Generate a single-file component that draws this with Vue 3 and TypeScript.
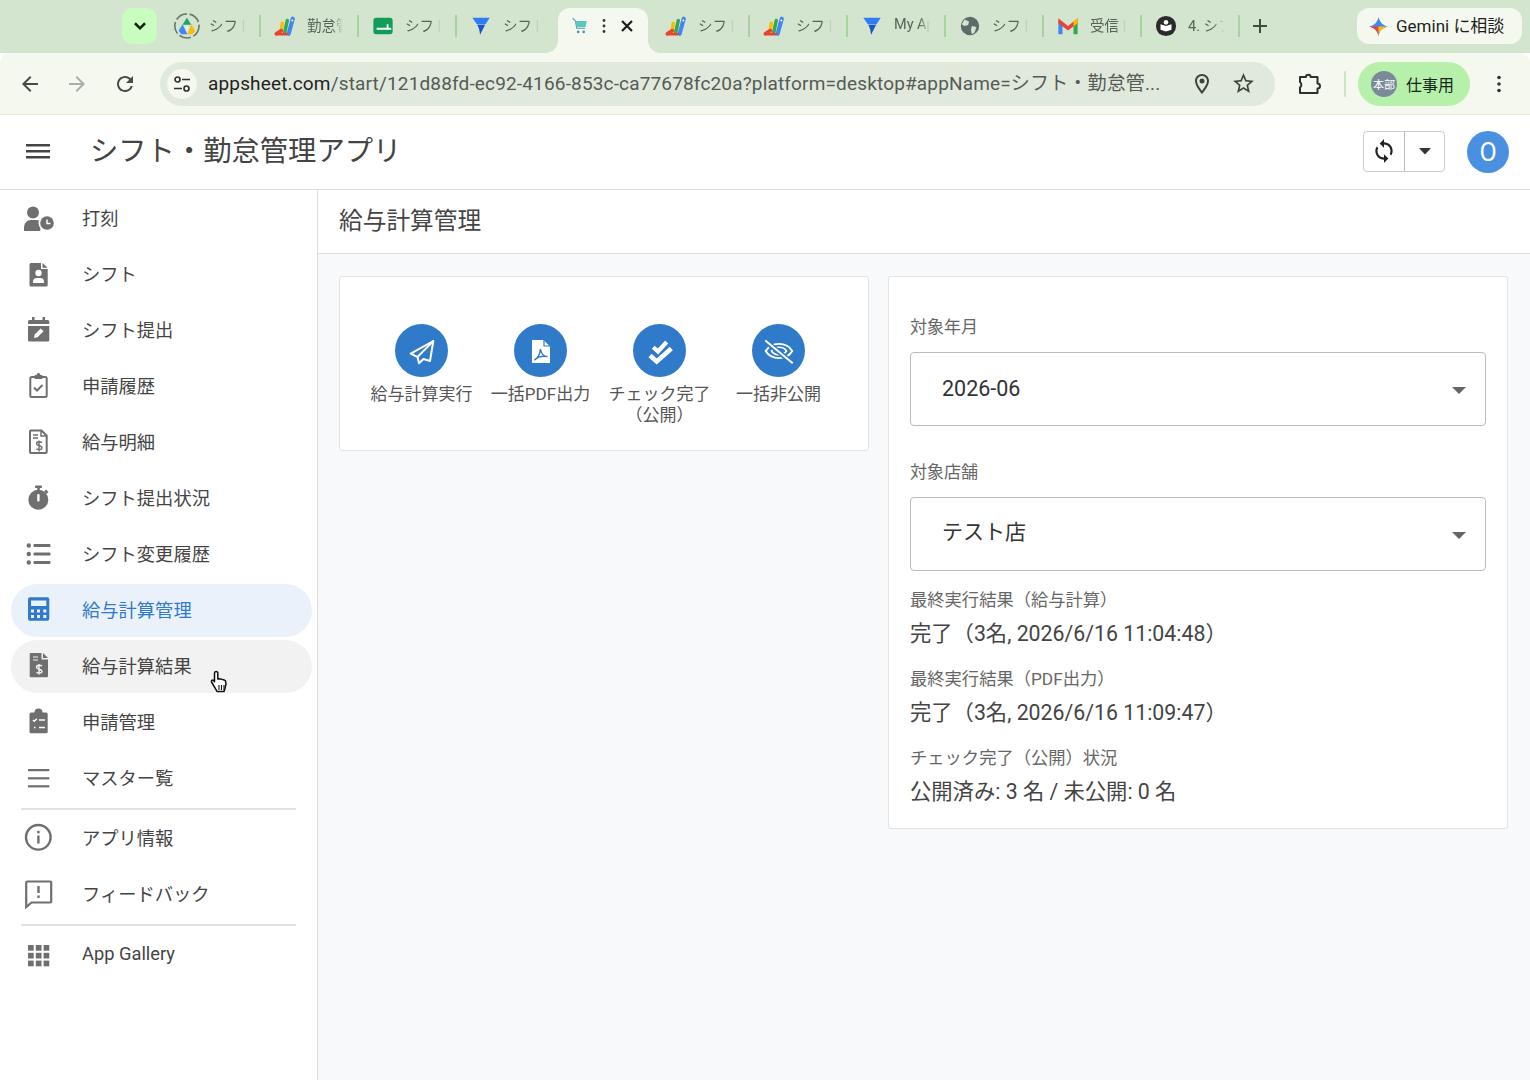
<script setup lang="ts">
interface Tab {
	icon: string
	title: string
	active?: boolean
}

interface NavItem {
	label: string
	icon: string
	state?: string
}

const driveIcon = `<g transform="translate(-2.500 -2.500) scale(1.200)"><circle cx="12" cy="12" r="11" fill="none" stroke="#6b7a6b" stroke-width="1.500" stroke-dasharray="11 2.500"/><path d="M12 4.500l4 6.500H8z" fill="#1fa463"/><path d="M8 10.500l-3.500 6 2.500 3h5.500z" fill="#4285f4"/><path d="M16 10.500l3.500 6-2.500 3h-4.500z" fill="#fbbc04"/><path d="M12 11l-1.500 3 1.500 3 1.500-3z" fill="#e8f0e4"/></g>`
const fanIcon = `<g fill="none" stroke-linecap="round"><path d="M16 20.500L20.500 4" stroke="#4285f4" stroke-width="4.500"/><path d="M11.500 20L14.500 6" stroke="#34a853" stroke-width="3.800"/><path d="M7.500 20L9 9" stroke="#fbbc04" stroke-width="3.800"/><path d="M2.500 20.500L8 17" stroke="#ea4335" stroke-width="4"/><path d="M3 21h11" stroke="#ea4335" stroke-width="2.500"/></g><circle cx="20" cy="6" r="1" fill="#fff"/>`
const sheetIcon = `<rect x="1.500" y="3" width="21" height="18" rx="3" fill="#0f9d58"/><path d="M5 14h11v-4h2v4h3v2H5z" fill="#fff"/>`
const appsheetIcon = `<path d="M2.500 3h19l-4.500 7H7.500z" fill="#2f7df6"/><path d="M8 10.500h8.500L11 21.500l-1-6z" fill="#1a56c4"/>`
const cartIcon = `<path d="M4 3.500L7 6.500l1.500 8h9" fill="none" stroke="#5a90b0" stroke-width="1.200"/><path d="M7 6.500h12.300l-1.300 6.500H8.300z" fill="#55c8c0"/><circle cx="10" cy="18.500" r="1.500" fill="#5a8fb5"/><circle cx="16" cy="18.500" r="1.500" fill="#5a8fb5"/>`
const globeIcon = `<circle cx="12" cy="12" r="10" fill="#5f6b66"/><path d="M6 5l5 2-1 4-4 1-3-2zM14 12l5 1-2 6-3 2-1-5z" fill="#d3e5ce"/>`
const gmailIcon = `<path d="M1.500 6v15h4.500V10z" fill="#4285f4"/><path d="M22.500 6v15H18V10z" fill="#34a853"/><path d="M1.500 3.500L12 12l10.500-8.500v5.500L12 17 1.500 9z" fill="#ea4335"/><path d="M18 6.500l4.500-3v5.500L18 12.500z" fill="#fbbc04"/>`
const bookIcon = `<circle cx="12" cy="12" r="11" fill="#2a2a2a"/><path d="M6 10l6 2 6-2v6l-6 2-6-2z" fill="#fff"/><circle cx="12" cy="8" r="2.500" fill="#fff"/>`

const tabs: Tab[] = [
	{ icon: driveIcon, title: "シフト・勤怠" },
	{ icon: fanIcon, title: "勤怠管理" },
	{ icon: sheetIcon, title: "シフト・勤怠" },
	{ icon: appsheetIcon, title: "シフト・勤怠" },
	{ icon: cartIcon, title: "", active: true },
	{ icon: fanIcon, title: "シフト・勤怠" },
	{ icon: fanIcon, title: "シフト・勤怠" },
	{ icon: appsheetIcon, title: "My Apps" },
	{ icon: globeIcon, title: "シフト・勤怠" },
	{ icon: gmailIcon, title: "受信トレイ" },
	{ icon: bookIcon, title: "4. シフト" },
]

// sidebar icons live on a 40x40 box centred on the row
const nav: NavItem[] = [
	{
		label: "打刻",
		icon: `<circle cx="15" cy="15.500" r="6"/><path d="M6 34v-3c0-5 3-8 7-8h5c3 0 5 1 6 2l-2 9z"/><circle cx="29" cy="26" r="8.500" fill="#fff"/><circle cx="29" cy="26" r="6.800"/><path d="M29 22.500V26.500h3.500" fill="none" stroke="#fff" stroke-width="1.500"/>`,
	},
	{
		label: "シフト",
		icon: `<path d="M13 10h10v6h6.700v16a1.500 1.500 0 0 1-1.500 1.500H13a1.500 1.500 0 0 1-1.500-1.500V11.500A1.500 1.500 0 0 1 13 10z"/><path d="M24.500 10l5.200 4.800h-5.200z"/><circle cx="20.500" cy="20" r="3.200" fill="#fff"/><path d="M15 30v-1.500c0-2 1.500-3.500 3.500-3.500h4c2 0 3.500 1.500 3.500 3.500V30z" fill="#fff"/>`,
	},
	{
		label: "シフト提出",
		icon: `<path d="M14 8h2.500v3h8v-3H27v3h2.800a1.500 1.500 0 0 1 1.500 1.500V15H10v-2.500A1.500 1.500 0 0 1 11.500 11H14z"/><path d="M10 17h21.300v14a1.500 1.500 0 0 1-1.500 1.500h-18.300A1.500 1.500 0 0 1 10 31z"/><path d="M16 29l.7-3.500 6-6 2.800 2.800-6 6z" fill="#fff"/>`,
	},
	{
		label: "申請履歴",
		icon: `<rect x="12.300" y="12" width="16.400" height="20" rx="1.500" fill="none" stroke="currentColor" stroke-width="2"/><rect x="16.500" y="10" width="8" height="4" rx="1"/><circle cx="20.500" cy="9.800" r="1.800"/><path d="M16 22.500l3 3 5.500-5.500" fill="none" stroke="currentColor" stroke-width="2"/>`,
	},
	{
		label: "給与明細",
		icon: `<path d="M13 9.500h10.500l5.200 5.200V31a1 1 0 0 1-1 1H13a1 1 0 0 1-1-1V10.500a1 1 0 0 1 1-1z" fill="none" stroke="currentColor" stroke-width="2"/><path d="M15 14h5M15 17h5M23 10v5h5" fill="none" stroke="currentColor" stroke-width="1.500"/><path d="M24 21.500c-1-1-5.500-1.300-5.500 1.200s5.500 1.500 5.500 4-4.500 2.200-5.500 1M21 19.500v11" fill="none" stroke="currentColor" stroke-width="1.400"/>`,
	},
	{
		label: "シフト提出状況",
		icon: `<rect x="17" y="8.500" width="7" height="2.500" rx=".8"/><rect x="19.200" y="10" width="2.600" height="4"/><circle cx="20.300" cy="22.700" r="10"/><path d="M28 12.500l2.500 2.500-2 2-2.500-2.500z"/><rect x="19.200" y="17" width="2.400" height="7.500" rx="1" fill="#fff"/>`,
	},
	{
		label: "シフト変更履歴",
		icon: `<circle cx="10.800" cy="12.500" r="2.200"/><circle cx="10.800" cy="21" r="2.200"/><circle cx="10.800" cy="29.500" r="2.200"/><rect x="15.500" y="11" width="17" height="3" rx="1"/><rect x="15.500" y="19.500" width="17" height="3" rx="1"/><rect x="15.500" y="28" width="17" height="3" rx="1"/>`,
	},
	{
		label: "給与計算管理",
		state: "active",
		icon: `<rect x="10" y="8.300" width="21.300" height="23.400" rx="2"/><rect x="13" y="11.500" width="15.300" height="5.500" fill="#eaf1fb"/><g fill="#eaf1fb"><rect x="13" y="20.500" width="3" height="3"/><rect x="19" y="20.500" width="3" height="3"/><rect x="25.300" y="20.500" width="3" height="3"/><rect x="13" y="26" width="3" height="3"/><rect x="19" y="26" width="3" height="3"/><rect x="25.300" y="26" width="3" height="3"/></g>`,
	},
	{
		label: "給与計算結果",
		state: "hover",
		icon: `<path d="M13 8h10.500v6.500H30V31a1.300 1.300 0 0 1-1.300 1.300H13a1.300 1.300 0 0 1-1.300-1.300V9.300A1.300 1.300 0 0 1 13 8z"/><path d="M25 8l5 5h-5z"/><path d="M15 12h5M15 15h5" stroke="#f2f2f2" stroke-width="1.200"/><path d="M24 21c-1-1-5.500-1.300-5.500 1.200s5.500 1.500 5.500 4-4.500 2.200-5.500 1M21 19v10.500" fill="none" stroke="#f2f2f2" stroke-width="1.400"/>`,
	},
	{
		label: "申請管理",
		icon: `<path d="M13 11.500h3.500a4 4 0 0 1 8 0H28a1.500 1.500 0 0 1 1.700 1.500v17.800a1.500 1.500 0 0 1-1.500 1.500H13a1.500 1.500 0 0 1-1.500-1.500V13a1.500 1.500 0 0 1 1.500-1.500z"/><path d="M15 19l1.300 1.300 2.500-2.500M21 19h6M16 26.500h1.500M21 26.500h6" fill="none" stroke="#fff" stroke-width="1.400"/>`,
	},
	{
		label: "マスター覧",
		icon: `<rect x="10" y="12" width="21.300" height="2.200"/><rect x="10" y="20.200" width="21.300" height="2.200"/><rect x="10" y="28.200" width="21.300" height="2.200"/>`,
	},
]

const navExtra: NavItem[] = [
	{
		label: "アプリ情報",
		icon: `<circle cx="20.300" cy="20.300" r="12.300" fill="none" stroke="currentColor" stroke-width="2.400"/><rect x="19.200" y="18.500" width="2.400" height="8"/><rect x="19.200" y="13.800" width="2.400" height="2.600"/>`,
	},
	{
		label: "フィードバック",
		icon: `<path d="M8.200 9.500a1 1 0 0 1 1-1h23a1 1 0 0 1 1 1v19a1 1 0 0 1-1 1H13.500l-5.300 4.500z" fill="none" stroke="currentColor" stroke-width="2.200"/><rect x="19.300" y="13" width="2.400" height="7"/><rect x="19.300" y="22.500" width="2.400" height="2.500"/>`,
	},
]

const gridCells = [10, 17.8, 25.6].flatMap((y) =>
	[10, 17.8, 25.6].map((x) => `<rect x="${x}" y="${y + 1}" width="5.700" height="5.700"/>`),
)

const actions = [
	{
		label: "給与計算実行",
		icon: `<path d="M29.300 8L6.700 20.700l6.800 3.300L15 30.300l4.500-4.300 6.500 2z" fill="none" stroke="#fff" stroke-width="2" stroke-linejoin="round"/><path d="M13.500 24L29.300 8" fill="none" stroke="#fff" stroke-width="1.800"/>`,
	},
	{
		label: "一括PDF出力",
		icon: `<path d="M9 7h11.500l6.500 6.500V30H9z" fill="#fff"/><path d="M21 6.500v6.500h6.500" fill="none" stroke="#2f7bc9" stroke-width="1.200"/><path d="M11.500 27c3.500-2 5.500-6 6-11 .5 4 3 7.500 7 7.500-4.500-.5-9.500 0-13 3.500z" fill="none" stroke="#2f7bc9" stroke-width="1.500"/>`,
	},
	{
		label: "チェック完了\n（公開）",
		icon: `<path d="M11.300 14.200L16 18.500l8.700-9.500" fill="none" stroke="#fff" stroke-width="4.200"/><path d="M8 22.500l6.700 6L29.300 15.500" fill="none" stroke="#fff" stroke-width="4.600"/>`,
	},
	{
		label: "一括非公開",
		icon: `<path d="M4.700 18c5.500-9.500 21-9.500 26.600 0-5.600 9.500-21 9.500-26.600 0z" fill="none" stroke="#fff" stroke-width="1.900"/><path d="M10.500 18c3-5 12-5 15 0-3 5-12 5-15 0z" fill="none" stroke="#fff" stroke-width="1.700"/><path d="M4.300 8l27.400 22.300" stroke="#2f7bc9" stroke-width="5"/><path d="M4.300 7.500l27.400 22.800" stroke="#fff" stroke-width="2"/>`,
	},
]

const results = [
	{ label: "最終実行結果（給与計算）", value: "完了（3名, 2026/6/16 11:04:48）" },
	{ label: "最終実行結果（PDF出力）", value: "完了（3名, 2026/6/16 11:09:47）" },
	{ label: "チェック完了（公開）状況", value: "公開済み: 3 名 / 未公開: 0 名" },
]

const selects = [
	{ label: "対象年月", value: "2026-06", cjk: false },
	{ label: "対象店舗", value: "テスト店", cjk: true },
]
</script>

<template>
	<div class="page">
		<div class="tabstrip">
			<button class="tab-search">
				<svg viewBox="0 0 24 24" width="22" height="22"><path d="M6.500 9l5.500 5.500L17.500 9" fill="none" stroke="#10240f" stroke-width="2.800" /></svg>
			</button>
			<div class="tabs">
				<div v-for="(tab, i) in tabs" :key="i" class="tab" :class="{ active: tab.active, nosep: tabs[i + 1]?.active }">
					<svg class="favicon" viewBox="0 0 24 24" width="22" height="22" v-html="tab.icon"></svg>
					<template v-if="tab.active">
						<svg viewBox="0 0 4 16" width="4" height="16" class="tab-more"><circle cx="2" cy="2.500" r="1.400" /><circle cx="2" cy="8" r="1.400" /><circle cx="2" cy="13.500" r="1.400" /></svg>
						<svg viewBox="0 0 14 14" width="14" height="14"><path d="M2 2l10 10M12 2L2 12" stroke="#1c1c1c" stroke-width="2.200" /></svg>
					</template>
					<span v-else class="tab-title">{{ tab.title }}</span>
				</div>
				<svg class="tab-new" viewBox="0 0 16 16" width="16" height="16"><path d="M8 1v14M1 8h14" stroke="#3f4d3f" stroke-width="2" /></svg>
			</div>
			<div class="gemini">
				<svg viewBox="0 0 24 24" width="21" height="21">
					<path d="M12 1c1 6 5 10 11 11-6 1-10 5-11 11-1-6-5-10-11-11 6-1 10-5 11-11z" fill="#4285f4" />
					<path d="M12 12V1c1 6 5 10 11 11z" fill="#3f8cf0" />
					<path d="M12 12H1c6 1 10 5 11 11z" fill="#ea4335" />
					<path d="M12 12h11c-6 1-10 5-11 11z" fill="#fbbc04" />
				</svg>
				<span>Gemini に相談</span>
			</div>
		</div>

		<div class="toolbar">
			<svg class="tool back" viewBox="0 0 24 24" width="24" height="24"><path d="M20 11H7.830l5.590-5.590L12 4l-8 8 8 8 1.410-1.410L7.830 13H20v-2z" /></svg>
			<svg class="tool forward" viewBox="0 0 24 24" width="24" height="24"><path d="M12 4l-1.410 1.410L16.170 11H4v2h12.170l-5.580 5.590L12 20l8-8z" /></svg>
			<svg class="tool" viewBox="0 0 24 24" width="24" height="24"><path d="M17.650 6.350A7.958 7.958 0 0 0 12 4c-4.420 0-7.990 3.580-7.990 8s3.570 8 7.990 8c3.730 0 6.840-2.550 7.730-6h-2.080A5.990 5.990 0 0 1 12 18c-3.310 0-6-2.690-6-6s2.690-6 6-6c1.660 0 3.140.690 4.220 1.780L13 11h7V4l-2.350 2.350z" /></svg>
			<div class="omnibox">
				<span class="site-info">
					<svg viewBox="0 0 20 20" width="20" height="20" fill="none" stroke="#333" stroke-width="1.700"><circle cx="5.500" cy="5.500" r="2.500" /><path d="M10 5.500h8M2 14.500h8" /><circle cx="14.500" cy="14.500" r="2.500" /></svg>
				</span>
				<span class="url"><b>appsheet.com</b>/start/121d88fd-ec92-4166-853c-ca77678fc20a?platform=desktop#appName=シフト・勤怠管...</span>
				<svg class="omni-icon" viewBox="0 0 24 24" width="24" height="24"><path d="M12 2C8.130 2 5 5.130 5 9c0 5.250 7 13 7 13s7-7.750 7-13c0-3.870-3.130-7-7-7zM7 9c0-2.760 2.240-5 5-5s5 2.240 5 5c0 2.880-2.880 7.190-5 9.880C9.920 16.210 7 11.850 7 9z" /><circle cx="12" cy="9" r="2.500" /></svg>
				<svg class="omni-icon" viewBox="0 0 24 24" width="25" height="25"><path d="M22 9.240l-7.190-.62L12 2 9.190 8.630 2 9.240l5.460 4.730L5.820 21 12 17.270 18.180 21l-1.630-7.030L22 9.240zM12 15.400l-3.760 2.270 1-4.280-3.320-2.880 4.380-.38L12 6.100l1.710 4.040 4.380.38-3.320 2.880 1 4.280L12 15.400z" /></svg>
			</div>
			<svg class="ext" viewBox="0 0 26 26" width="26" height="26"><path d="M4 6h6a2.300 2.300 0 0 1 4.600 0h6.900v6.500a2.500 2.500 0 0 1 0 5V22H4v-5.500a3.500 3.500 0 0 0 0-5.500z" fill="none" stroke="#2a332a" stroke-width="2" stroke-linejoin="round" /></svg>
			<span class="tool-sep"></span>
			<div class="profile">
				<span class="profile-avatar">本部</span>
				<span>仕事用</span>
			</div>
			<svg class="kebab" viewBox="0 0 4 18" width="4" height="18"><circle cx="2" cy="2.500" r="1.800" /><circle cx="2" cy="9" r="1.800" /><circle cx="2" cy="15.500" r="1.800" /></svg>
		</div>

		<header class="app-header">
			<svg class="menu" viewBox="0 0 24 20" width="24" height="20"><path d="M0 3h24v2.400H0zM0 9h24v2.400H0zM0 15h24v2.400H0z" /></svg>
			<h1>シフト・勤怠管理アプリ</h1>
			<div class="sync">
				<span class="sync-main">
					<svg viewBox="0 0 24 24" width="26" height="26"><path d="M12 4V1L8 5l4 4V6c3.310 0 6 2.690 6 6 0 1.010-.25 1.970-.7 2.800l1.460 1.460A7.930 7.930 0 0 0 20 12c0-4.420-3.580-8-8-8zm0 14c-3.310 0-6-2.690-6-6 0-1.010.25-1.970.7-2.800L5.240 7.740A7.930 7.930 0 0 0 4 12c0 4.420 3.580 8 8 8v3l4-4-4-4v3z" /></svg>
				</span>
				<span class="sync-drop">
					<svg viewBox="0 0 12 7" width="12" height="7"><path d="M0 0h12L6 6.500z" /></svg>
				</span>
			</div>
			<span class="user">O</span>
		</header>

		<div class="app-body">
			<nav class="sidebar">
				<a v-for="item in nav" :key="item.label" class="nav-item" :class="item.state">
					<svg class="nav-icon" viewBox="0 0 40 40" width="40" height="40" v-html="item.icon"></svg>
					<span>{{ item.label }}</span>
				</a>
				<hr class="rule-first" />
				<a v-for="item in navExtra" :key="item.label" class="nav-item">
					<svg class="nav-icon" viewBox="0 0 40 40" width="40" height="40" v-html="item.icon"></svg>
					<span>{{ item.label }}</span>
				</a>
				<hr />
				<a class="nav-item">
					<svg class="nav-icon" viewBox="0 0 40 40" width="40" height="40" v-html="gridCells.join('')"></svg>
					<span>App Gallery</span>
				</a>
				<svg class="pointer" viewBox="0 0 20 24" width="20" height="24">
					<path d="M6 1.500c1 0 1.800.8 1.800 1.800V9l1-.3 1.200.3 1.200.1 1.300.5 1.500.3 1.500 1 .5 3-1 4.500-1 3H7l-2-3.500L1.500 12c-.6-1.500 1-2.500 2-1.500l1 1.200V3.300c0-1 .5-1.800 1.500-1.800z" fill="#fff" stroke="#111" stroke-width="1.500" stroke-linejoin="round" />
					<path d="M9 15v5M11.500 15v5M14 15v5" stroke="#111" stroke-width="1.100" />
				</svg>
			</nav>

			<main class="content">
				<div class="content-title">給与計算管理</div>
				<div class="content-body">
					<section class="card actions">
						<div v-for="action in actions" :key="action.label" class="action">
							<span class="action-circle">
								<svg viewBox="0 0 36 36" width="36" height="36" v-html="action.icon"></svg>
							</span>
							<span class="action-label">{{ action.label }}</span>
						</div>
					</section>
					<section class="card form">
						<div v-for="field in selects" :key="field.label" class="field">
							<div class="field-label">{{ field.label }}</div>
							<div class="select">
								<span :class="{ cjk: field.cjk }">{{ field.value }}</span>
								<svg viewBox="0 0 14 7" width="14" height="7"><path d="M0 0h14L7 7z" /></svg>
							</div>
						</div>
						<div class="results">
							<div v-for="row in results" :key="row.label" class="result">
								<div class="field-label">{{ row.label }}</div>
								<div class="result-value">{{ row.value }}</div>
							</div>
						</div>
					</section>
				</div>
			</main>
		</div>
	</div>
</template>

<style>
html,
body {
	margin: 0;
	background: #fff;
	overflow: hidden;
}
</style>

<style scoped>
.page {
	width: 1530px;
	height: 1080px;
	display: flex;
	flex-direction: column;
	overflow: hidden;
	font-family: Roboto, "Noto Sans CJK JP", sans-serif;
	color: #444;
}

.tabstrip {
	height: 53px;
	flex: none;
	display: flex;
	align-items: flex-start;
	background: #d3e5ce;
	padding: 8px 8px 0 122px;
	box-sizing: border-box;
}

.tab-search {
	width: 35px;
	height: 36px;
	border: 0;
	padding: 0;
	border-radius: 10px;
	background: #c9fdc0;
	display: flex;
	align-items: center;
	justify-content: center;
}

.tabs {
	display: flex;
	align-items: flex-start;
	margin-left: 5px;
	flex: 1;
}

.tab {
	width: 98px;
	height: 36px;
	box-sizing: border-box;
	display: flex;
	align-items: center;
	gap: 11px;
	padding-left: 14px;
	position: relative;
	flex: none;
}

.tab::after {
	content: "";
	position: absolute;
	right: -1px;
	top: 7px;
	height: 22px;
	width: 2px;
	background: #a7d39e;
}

.tab.nosep::after {
	display: none;
}

.tab.active {
	width: 90px;
	height: 45px;
	margin: 0 3px 0 4px;
	padding: 0 0 9px 11px;
	gap: 0;
	background: #f4f8ef;
	border-radius: 12px 12px 0 0;
}

/* the flared feet of the active tab */
.tab.active::before,
.tab.active::after {
	content: "";
	position: absolute;
	top: auto;
	bottom: 0;
	width: 12px;
	height: 12px;
}

.tab.active::before {
	left: -12px;
	background: radial-gradient(circle at 0 0, transparent 11.500px, #f4f8ef 12px);
}

.tab.active::after {
	right: -12px;
	background: radial-gradient(circle at 100% 0, transparent 11.500px, #f4f8ef 12px);
}

.tab-more {
	margin-left: 11px;
	fill: #333;
	margin-right: 14px;
}

.favicon {
	flex: none;
	overflow: visible;
}

.tab-title {
	width: 36px;
	overflow: hidden;
	white-space: nowrap;
	font-size: 14.500px;
	color: #59625a;
	margin-bottom: 3px;
	-webkit-mask-image: linear-gradient(to right, #000 70%, transparent 100%);
	mask-image: linear-gradient(to right, #000 70%, transparent 100%);
}

.tab-new {
	margin: 10px 0 0 13px;
}

.gemini {
	width: 165px;
	height: 36px;
	flex: none;
	display: flex;
	align-items: center;
	gap: 7px;
	padding-left: 11px;
	box-sizing: border-box;
	border-radius: 12px;
	background: #f4f8ef;
	color: #1f1f1f;
	font-size: 17px;
}

.gemini span {
	margin-bottom: 4px;
}

.toolbar {
	height: 62px;
	flex: none;
	display: flex;
	align-items: center;
	background: #f4f8ef;
	border-radius: 10px 10px 0 0;
	box-sizing: border-box;
	padding: 0 0 0 18px;
	border-bottom: 1px solid #e4e8e0;
}

.tool {
	fill: #454c45;
	margin-right: 23px;
	flex: none;
}

.forward {
	fill: #a9aea7;
	margin-right: 24px;
}

.omnibox {
	width: 1115px;
	height: 44px;
	flex: none;
	display: flex;
	align-items: center;
	background: #e1e9dd;
	border-radius: 22px;
	box-sizing: border-box;
	padding-left: 7px;
}

.site-info {
	width: 30px;
	height: 30px;
	border-radius: 50%;
	background: #f4f8ef;
	display: flex;
	align-items: center;
	justify-content: center;
	flex: none;
}

.url {
	margin: 0 0 5px 11px;
	width: 982px;
	flex: none;
	white-space: nowrap;
	overflow: hidden;
	font-size: 19px;
	letter-spacing: 0.16px;
	color: #555b55;
}

.url b {
	font-weight: 400;
	color: #1f1f1f;
}

.omni-icon {
	fill: #3d443d;
	flex: none;
	margin-right: 17px;
}

.ext {
	margin-left: 21px;
	flex: none;
}

.tool-sep {
	width: 2px;
	height: 26px;
	background: #cfe5c6;
	margin: 0 12px 0 22px;
}

.profile {
	width: 112px;
	height: 44px;
	flex: none;
	box-sizing: border-box;
	padding-left: 13px;
	display: flex;
	align-items: center;
	gap: 9px;
	border-radius: 22px;
	background: #b7f0aa;
	color: #16261a;
	font-size: 16px;
}

.profile-avatar {
	width: 26px;
	height: 26px;
	border-radius: 50%;
	background: #7a8a99;
	color: #fff;
	font-size: 11px;
	display: flex;
	align-items: center;
	justify-content: center;
}

.kebab {
	margin-left: 27px;
	fill: #333;
}

.app-header {
	height: 75px;
	flex: none;
	box-sizing: border-box;
	display: flex;
	align-items: center;
	background: #fff;
	border-bottom: 1px solid #ddd;
	padding: 0 21px 0 26px;
}

.menu {
	fill: #444;
	margin-top: -2px;
}

.app-header h1 {
	margin: 0 0 8px 40px;
	font-size: 28.300px;
	font-weight: 400;
	flex: 1;
	color: #444;
}

.sync {
	display: flex;
	height: 41px;
	width: 82px;
	box-sizing: border-box;
	border: 1px solid #ccc;
	border-radius: 4px;
	margin: 0 22px 2px 0;
}

.sync-main {
	width: 40px;
	border-right: 1px solid #bbb;
	display: flex;
	align-items: center;
	justify-content: center;
	fill: #222;
}

.sync-drop {
	flex: 1;
	display: flex;
	align-items: center;
	justify-content: center;
	fill: #333;
}

.user {
	width: 42px;
	height: 42px;
	border-radius: 50%;
	background: #4a90e0;
	color: #fff;
	font-size: 25px;
	display: flex;
	align-items: center;
	justify-content: center;
}

.app-body {
	flex: 1;
	display: flex;
	min-height: 0;
}

.sidebar {
	width: 318px;
	flex: none;
	box-sizing: border-box;
	border-right: 1px solid #ddd;
	position: relative;
	display: flex;
	flex-direction: column;
}

.nav-item {
	height: 56px;
	flex: none;
	display: flex;
	align-items: center;
	box-sizing: border-box;
	font-size: 18.300px;
	color: #444;
	position: relative;
	padding-left: 18px;
}

.nav-item::before {
	content: "";
	position: absolute;
	left: 11px;
	width: 301px;
	top: 1.500px;
	bottom: 1.500px;
	border-radius: 27px;
}

.nav-item.active::before {
	background: #eaf1fb;
}

.nav-item.hover::before {
	background: #f2f2f2;
}

.nav-item.active {
	color: #2f7bc9;
}

.nav-icon {
	fill: currentColor;
	color: #6f6f6f;
	position: relative;
	flex: none;
	margin-top: -2px;
}

.nav-item.active .nav-icon {
	color: #2f7bc9;
}

.nav-item span {
	position: relative;
	margin-left: 24px;
	margin-top: -3px;
}

.sidebar hr {
	width: 275px;
	margin: 2px 0 1px 21px;
	height: 2px;
	border: 0;
	background: #e2e2e2;
	flex: none;
}

.sidebar hr.rule-first {
	margin-bottom: 0;
}

.pointer {
	position: absolute;
	left: 210px;
	top: 480px;
}

.content {
	flex: 1;
	background: #f8f9fa;
	display: flex;
	flex-direction: column;
}

.content-title {
	height: 64px;
	flex: none;
	box-sizing: border-box;
	display: flex;
	align-items: center;
	padding: 0 0 5px 21px;
	background: #fff;
	border-bottom: 1px solid #ddd;
	font-size: 23.700px;
	color: #444;
}

.content-body {
	display: flex;
	align-items: flex-start;
	gap: 19px;
	padding: 22px 22px 0 21px;
}

.card {
	background: #fff;
	border: 1px solid #e3e3e3;
	border-radius: 3px;
	box-sizing: border-box;
}

.actions {
	width: 530px;
	height: 175px;
	padding: 47px 0 0 22px;
	display: flex;
	align-items: flex-start;
}

.action {
	width: 119px;
	display: flex;
	flex-direction: column;
	align-items: center;
	flex: none;
}

.action-circle {
	width: 53px;
	height: 53px;
	border-radius: 50%;
	background: #2f7bc9;
	display: flex;
	align-items: center;
	justify-content: center;
}

.action-label {
	margin-top: 7px;
	font-size: 17px;
	line-height: 21px;
	color: #555;
	text-align: center;
	white-space: pre-line;
}

.form {
	width: 620px;
	padding: 38px 21px 22px;
}

.field + .field {
	margin-top: 34px;
}

.field-label {
	font-size: 17px;
	line-height: 24px;
	color: #666;
}

.result .field-label {
	font-size: 17.300px;
}

.select {
	margin-top: 13px;
	height: 74px;
	box-sizing: border-box;
	border: 1px solid #bbb;
	border-radius: 4px;
	display: flex;
	align-items: center;
	justify-content: space-between;
	padding: 0 19px 0 31px;
	font-size: 21.500px;
	color: #333;
	fill: #666;
}

.select span {
	margin-bottom: 2px;
}

.select span.cjk {
	margin-bottom: 8px;
	font-size: 21px;
}

.select svg {
	margin-top: 3px;
}

.results {
	margin-top: 17px;
}

.result + .result {
	margin-top: 19px;
}

.result-value {
	margin-top: 8px;
	font-size: 21.300px;
	line-height: 28px;
	color: #444;
}
</style>
